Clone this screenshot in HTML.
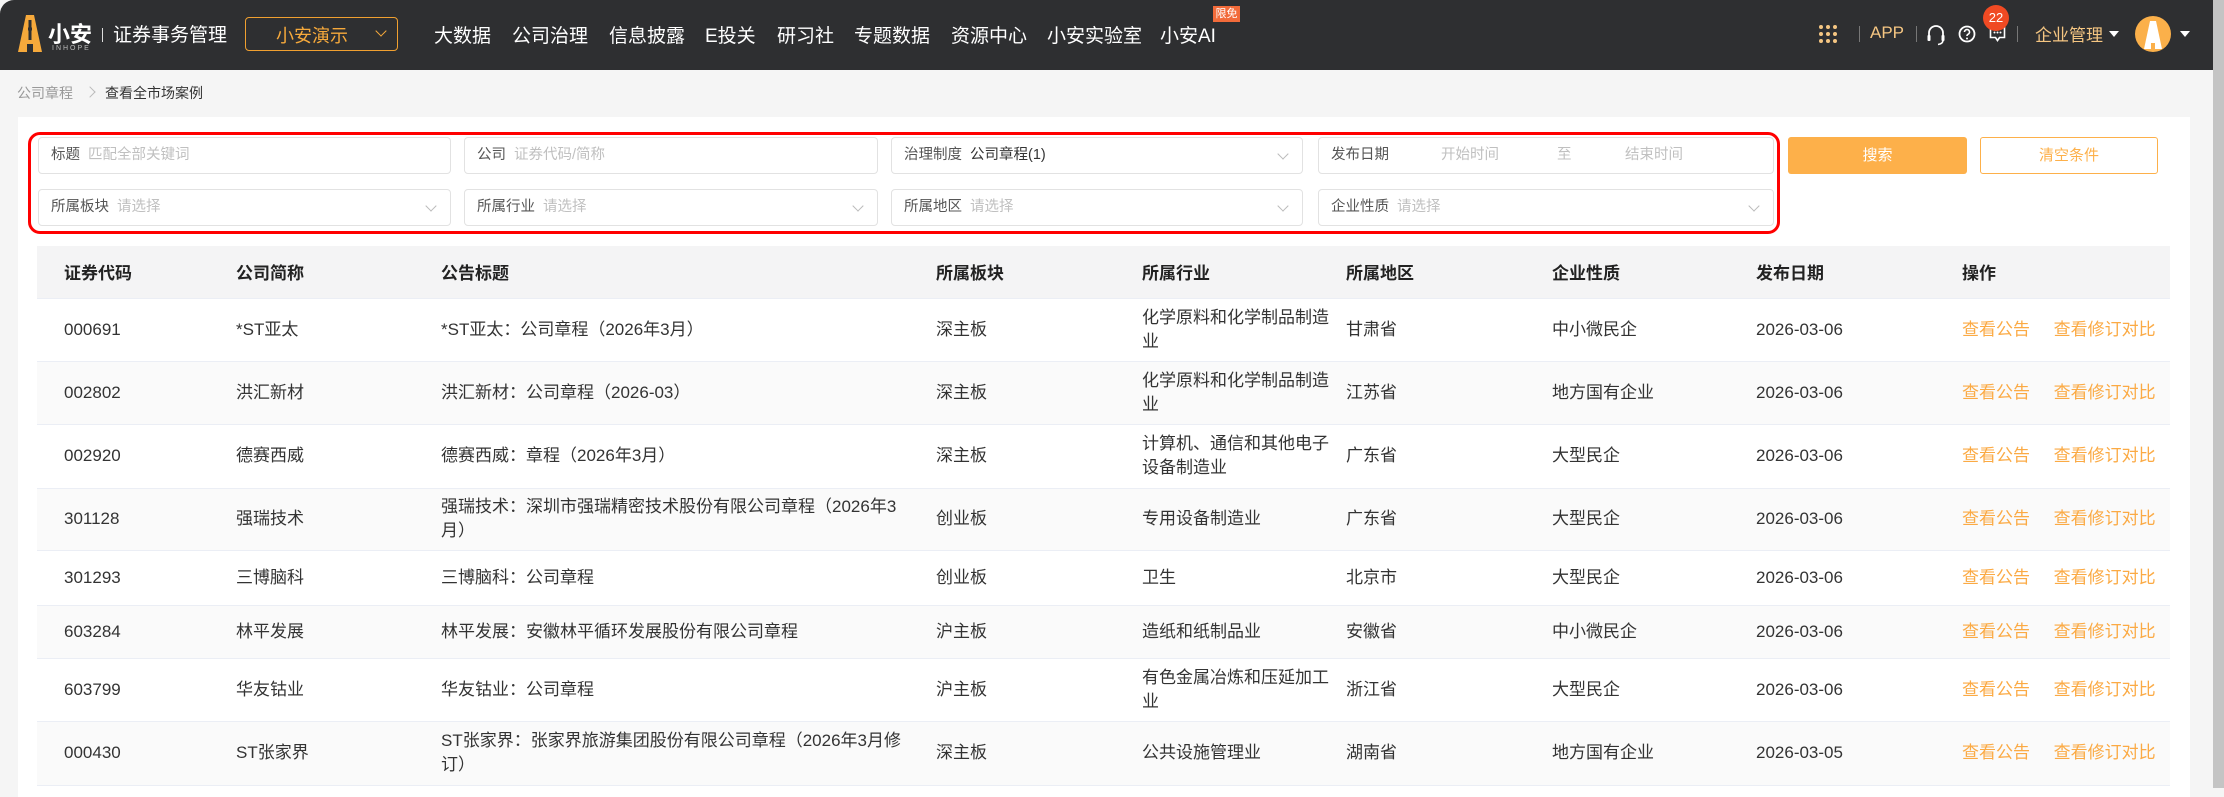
<!DOCTYPE html>
<html><head><meta charset="utf-8"><style>
*{margin:0;padding:0;box-sizing:border-box}
body{width:2224px;height:788px;overflow:hidden;background:#f5f5f5;font-family:"Liberation Sans","Noto Sans CJK SC",sans-serif;position:relative;color:#333}
.hd{position:absolute;left:0;top:0;width:2213px;height:70px;background:#2e2f31;border-top-left-radius:14px}
.a{position:absolute;white-space:nowrap}
.nav{color:#fff;font-size:19px;top:21px}
.r{color:#f5c682}
.sb{position:absolute;right:0;top:0;width:11px;height:788px;background:#c4c4c4}
.card{position:absolute;left:18px;top:117px;width:2172px;height:680px;background:#fff}
.f{position:absolute;height:37px;border:1px solid #e2e2e2;border-radius:4px;background:#fff;font-size:14.5px;line-height:35px;padding-left:12px;color:#555}
.f .p{color:#c0c0c0;margin-left:8px}
.chev{position:absolute;right:15px;top:12px;width:8px;height:8px;border-right:1px solid #bbb;border-bottom:1px solid #bbb;transform:rotate(45deg)}
table{position:absolute;left:37px;top:246px;border-collapse:collapse;table-layout:fixed;width:2133px;font-size:17px}
th{background:#f4f4f5;height:52px;text-align:left;font-weight:bold;color:#222;border-bottom:1px solid #ebeef5}
td{line-height:24px;color:#333;border-bottom:1px solid #ebeef5;vertical-align:middle}
tr.g td{background:#fafafa}
th:first-child,td:first-child{padding-left:27px}
.o{color:#fbaa44}
</style></head><body>
<div class="hd">
 <svg class="a" style="left:18px;top:15px" width="24" height="37" viewBox="0 0 24 37"><path d="M8 0h8l8 37h-9v-8h-6v8H0z" fill="#f6a93b"/><path d="M12 5v20M10 14h4" stroke="#2e2f31" stroke-width="3"/></svg>
 <div class="a" style="left:48px;top:17px;color:#fff;font-size:22px;font-weight:bold">小安</div>
 <div class="a" style="left:52px;top:45px;color:#bbb;font-size:7px;letter-spacing:2px">INHOPE</div>
 <div class="a" style="left:102px;top:28px;width:1px;height:14px;background:#ddd"></div>
 <div class="a" style="left:113px;top:20px;color:#fff;font-size:19px">证券事务管理</div>
 <div class="a" style="left:245px;top:17px;width:153px;height:34px;border:1px solid #f0a030;border-radius:4px"></div>
 <div class="a" style="left:276px;top:22px;color:#f6a93b;font-size:18px">小安演示</div>
 <div class="a" style="left:377px;top:27px;width:8px;height:8px;border-right:1px solid #f6a93b;border-bottom:1px solid #f6a93b;transform:rotate(45deg)"></div>
 <div class="a nav" style="left:434px">大数据</div>
 <div class="a nav" style="left:512px">公司治理</div>
 <div class="a nav" style="left:609px">信息披露</div>
 <div class="a nav" style="left:705px">E投关</div>
 <div class="a nav" style="left:777px">研习社</div>
 <div class="a nav" style="left:854px">专题数据</div>
 <div class="a nav" style="left:951px">资源中心</div>
 <div class="a nav" style="left:1047px">小安实验室</div>
 <div class="a nav" style="left:1160px">小安AI</div>
 <div class="a" style="left:1213px;top:6px;width:27px;height:16px;background:#f26b3a;color:#fff;font-size:11px;line-height:16px;text-align:center">限免</div>
 <svg class="a" style="left:1818px;top:24px" width="20" height="20"><g fill="#f5c682"><circle cx="3" cy="3" r="2"/><circle cx="10" cy="3" r="2"/><circle cx="17" cy="3" r="2"/><circle cx="3" cy="10" r="2"/><circle cx="10" cy="10" r="2"/><circle cx="17" cy="10" r="2"/><circle cx="3" cy="17" r="2"/><circle cx="10" cy="17" r="2"/><circle cx="17" cy="17" r="2"/></g></svg>
 <div class="a" style="left:1859px;top:26px;width:1px;height:16px;background:#777"></div>
 <div class="a r" style="left:1870px;top:23px;font-size:17px">APP</div>
 <div class="a" style="left:1916px;top:26px;width:1px;height:16px;background:#777"></div>
 <svg class="a" style="left:1926px;top:24px" width="20" height="22"><path d="M3 14V9a7 7 0 0 1 14 0v5" fill="none" stroke="#fff" stroke-width="1.8"/><rect x="1.5" y="11" width="3" height="6" rx="1" fill="#fff"/><rect x="15.5" y="11" width="3" height="6" rx="1" fill="#fff"/><path d="M17 16q0 4-5 4.5" fill="none" stroke="#fff" stroke-width="1.6"/></svg>
 <svg class="a" style="left:1958px;top:25px" width="18" height="18"><circle cx="9" cy="9" r="7.5" fill="none" stroke="#fff" stroke-width="1.8"/><path d="M6.5 7a2.5 2.5 0 1 1 3.5 2.3c-.8.4-1 .9-1 1.7" fill="none" stroke="#fff" stroke-width="1.6"/><circle cx="9" cy="13.5" r="1" fill="#fff"/></svg>
 <svg class="a" style="left:1989px;top:26px" width="17" height="17"><path d="M1.5 1.5h14v10h-5l-2 3-2-3h-5z" fill="none" stroke="#fff" stroke-width="1.6"/><g fill="#fff"><circle cx="5.5" cy="6.5" r="1"/><circle cx="8.5" cy="6.5" r="1"/><circle cx="11.5" cy="6.5" r="1"/></g></svg>
 <div class="a" style="left:1983px;top:5px;width:26px;height:26px;border-radius:13px;background:#f04a23;color:#fff;font-size:13px;line-height:26px;text-align:center">22</div>
 <div class="a" style="left:2017px;top:26px;width:1px;height:16px;background:#777"></div>
 <div class="a r" style="left:2035px;top:21px;font-size:17px">企业管理</div>
 <div class="a" style="left:2109px;top:31px;border-left:5px solid transparent;border-right:5px solid transparent;border-top:6px solid #fff"></div>
 <div class="a" style="left:2135px;top:16px;width:36px;height:36px;border-radius:18px;background:#fbb04a"></div>
 <svg class="a" style="left:2144px;top:21px" width="18" height="28"><path d="M6 0h6l6 28h-7v-6h-4v6H0z" fill="#fff"/></svg>
 <div class="a" style="left:2180px;top:31px;border-left:5px solid transparent;border-right:5px solid transparent;border-top:6px solid #fff"></div>
</div>
<div class="sb"></div>
<div class="a" style="left:17px;top:83px;font-size:14px;color:#999">公司章程</div>
<div class="a" style="left:86px;top:84px;width:8px;height:8px;border-right:1px solid #bbb;border-top:1px solid #bbb;transform:rotate(45deg);margin-top:4px"></div>
<div class="a" style="left:105px;top:83px;font-size:14px;color:#333">查看全市场案例</div>
<div class="card"></div>
<div class="f" style="left:38px;top:137px;width:413px">标题<span class="p">匹配全部关键词</span></div>
<div class="f" style="left:464px;top:137px;width:414px">公司<span class="p">证券代码/简称</span></div>
<div class="f" style="left:891px;top:137px;width:412px">治理制度<span style="margin-left:8px;color:#333">公司章程(1)</span><i class="chev"></i></div>
<div class="f" style="left:1318px;top:137px;width:456px">发布日期<span class="a" style="left:122px;color:#c0c0c0">开始时间</span><span class="a" style="left:238px;color:#c0c0c0">至</span><span class="a" style="left:306px;color:#c0c0c0">结束时间</span></div>
<div class="f" style="left:38px;top:189px;width:413px">所属板块<span class="p">请选择</span><i class="chev"></i></div>
<div class="f" style="left:464px;top:189px;width:414px">所属行业<span class="p">请选择</span><i class="chev"></i></div>
<div class="f" style="left:891px;top:189px;width:412px">所属地区<span class="p">请选择</span><i class="chev"></i></div>
<div class="f" style="left:1318px;top:189px;width:456px">企业性质<span class="p">请选择</span><i class="chev"></i></div>
<div class="a" style="left:28px;top:132px;width:1752px;height:102px;border:3px solid #f00;border-radius:12px"></div>
<div class="a" style="left:1788px;top:137px;width:179px;height:37px;background:#fdb04a;border-radius:3px;color:#fff;font-size:15px;line-height:37px;text-align:center">搜索</div>
<div class="a" style="left:1980px;top:137px;width:178px;height:37px;border:1px solid #fdb04a;border-radius:3px;color:#fdb04a;font-size:15px;line-height:35px;text-align:center">清空条件</div>
<table>
<colgroup><col style="width:199px"><col style="width:205px"><col style="width:495px"><col style="width:206px"><col style="width:204px"><col style="width:206px"><col style="width:204px"><col style="width:206px"><col style="width:208px"></colgroup>
<tr><th>证券代码</th><th>公司简称</th><th>公告标题</th><th>所属板块</th><th>所属行业</th><th>所属地区</th><th>企业性质</th><th>发布日期</th><th>操作</th></tr>
<tr style="height:63px"><td>000691</td><td>*ST亚太</td><td>*ST亚太：公司章程（2026年3月）</td><td>深主板</td><td>化学原料和化学制品制造<br>业</td><td>甘肃省</td><td>中小微民企</td><td>2026-03-06</td><td class="o">查看公告&nbsp;&nbsp;&nbsp;&nbsp;&nbsp;查看修订对比</td></tr>
<tr class="g" style="height:63px"><td>002802</td><td>洪汇新材</td><td>洪汇新材：公司章程（2026-03）</td><td>深主板</td><td>化学原料和化学制品制造<br>业</td><td>江苏省</td><td>地方国有企业</td><td>2026-03-06</td><td class="o">查看公告&nbsp;&nbsp;&nbsp;&nbsp;&nbsp;查看修订对比</td></tr>
<tr style="height:64px"><td>002920</td><td>德赛西威</td><td>德赛西威：章程（2026年3月）</td><td>深主板</td><td>计算机、通信和其他电子<br>设备制造业</td><td>广东省</td><td>大型民企</td><td>2026-03-06</td><td class="o">查看公告&nbsp;&nbsp;&nbsp;&nbsp;&nbsp;查看修订对比</td></tr>
<tr class="g" style="height:62px"><td>301128</td><td>强瑞技术</td><td>强瑞技术：深圳市强瑞精密技术股份有限公司章程（2026年3<br>月）</td><td>创业板</td><td>专用设备制造业</td><td>广东省</td><td>大型民企</td><td>2026-03-06</td><td class="o">查看公告&nbsp;&nbsp;&nbsp;&nbsp;&nbsp;查看修订对比</td></tr>
<tr style="height:55px"><td>301293</td><td>三博脑科</td><td>三博脑科：公司章程</td><td>创业板</td><td>卫生</td><td>北京市</td><td>大型民企</td><td>2026-03-06</td><td class="o">查看公告&nbsp;&nbsp;&nbsp;&nbsp;&nbsp;查看修订对比</td></tr>
<tr class="g" style="height:53px"><td>603284</td><td>林平发展</td><td>林平发展：安徽林平循环发展股份有限公司章程</td><td>沪主板</td><td>造纸和纸制品业</td><td>安徽省</td><td>中小微民企</td><td>2026-03-06</td><td class="o">查看公告&nbsp;&nbsp;&nbsp;&nbsp;&nbsp;查看修订对比</td></tr>
<tr style="height:63px"><td>603799</td><td>华友钴业</td><td>华友钴业：公司章程</td><td>沪主板</td><td>有色金属冶炼和压延加工<br>业</td><td>浙江省</td><td>大型民企</td><td>2026-03-06</td><td class="o">查看公告&nbsp;&nbsp;&nbsp;&nbsp;&nbsp;查看修订对比</td></tr>
<tr class="g" style="height:64px"><td>000430</td><td>ST张家界</td><td>ST张家界：张家界旅游集团股份有限公司章程（2026年3月修<br>订）</td><td>深主板</td><td>公共设施管理业</td><td>湖南省</td><td>地方国有企业</td><td>2026-03-05</td><td class="o">查看公告&nbsp;&nbsp;&nbsp;&nbsp;&nbsp;查看修订对比</td></tr>
</table>
</body></html>
